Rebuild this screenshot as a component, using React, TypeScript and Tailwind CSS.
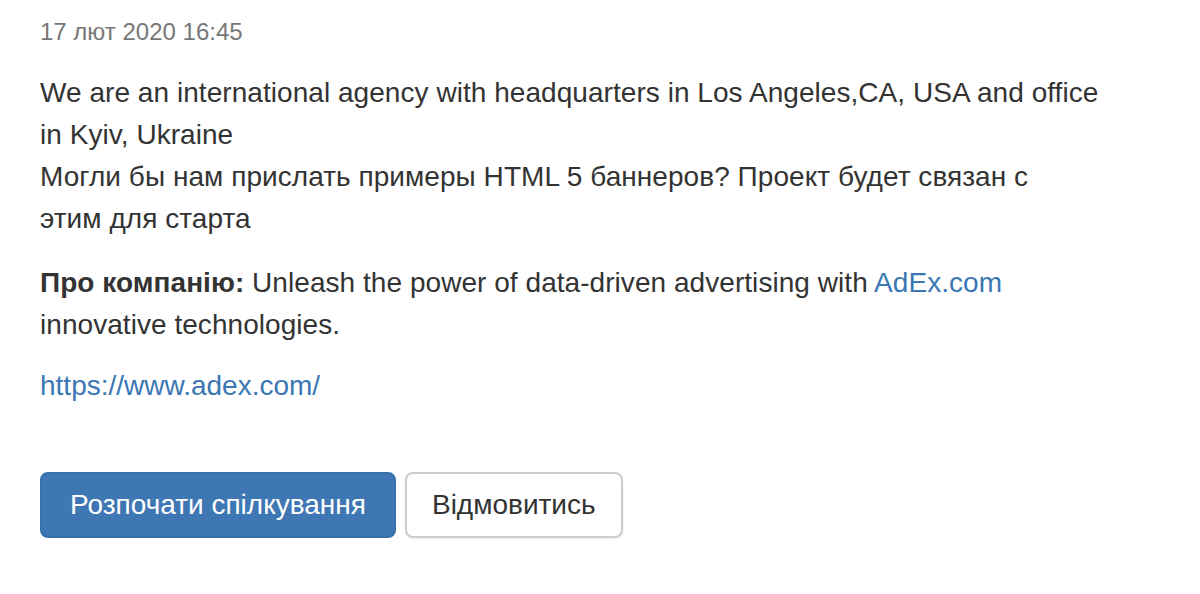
import React from 'react';

export default function App() {
  return (
    <div className="min-h-[594px] w-[1200px] bg-white pl-10 pt-[15px] text-[#333] font-['Liberation_Sans',Arial,sans-serif]">
      <div className="text-[24px] leading-[34px] text-[#777]">17 лют 2020 16:45</div>

      <p className="mt-[23px] w-[1068px] text-[28px] leading-[42px] tracking-[0.05px]">
        We are an international agency with headquarters in Los Angeles,CA, USA and office in Kyiv, Ukraine
        <br />
        Могли бы нам прислать примеры HTML 5 баннеров? Проект будет связан с
        <br />
        этим для старта
      </p>

      <p className="mt-[22px] w-[1068px] text-[28px] leading-[42px] tracking-[0.05px]">
        <strong className="font-bold">Про компанію:</strong> Unleash the power of data-driven advertising with{' '}
        <a href="#" className="text-[#3a77b3]">AdEx.com</a> innovative technologies.
      </p>

      <p className="mt-[19px] text-[28px] leading-[42px]">
        <a href="#" className="text-[#3a77b3]">https://www.adex.com/</a>
      </p>

      <div className="mt-[65px] flex gap-[9px]">
        <button className="h-[66px] rounded-[8px] border-2 border-[#3670ab] bg-[#3e77b3] px-[28px] text-[28px] text-white">
          Розпочати спілкування
        </button>
        <button className="h-[66px] rounded-[8px] border-2 border-[#ccc] bg-white px-[25px] text-[28px] text-[#333] shadow-[0_1px_2px_rgba(0,0,0,0.08)]">
          Відмовитись
        </button>
      </div>
    </div>
  );
}
